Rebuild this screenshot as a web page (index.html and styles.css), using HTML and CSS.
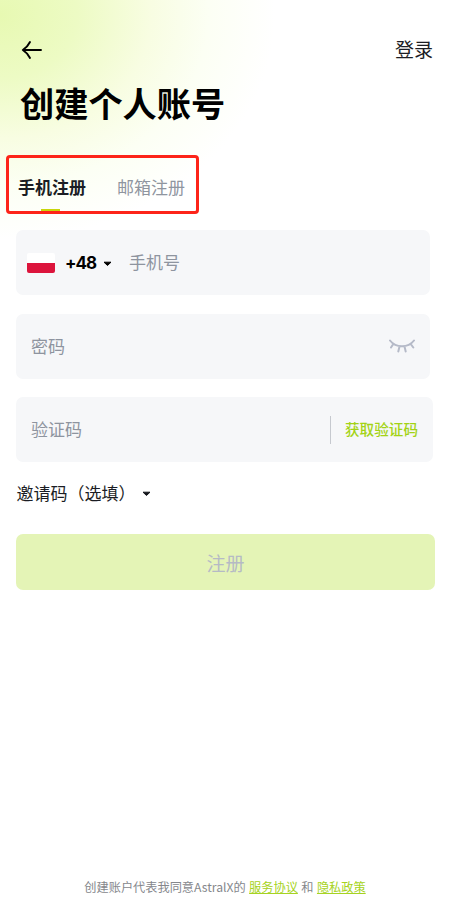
FILE: index.html
```html
<!DOCTYPE html>
<html lang="zh-CN">
  <head>
    <meta charset="UTF-8" />
    <meta name="viewport" content="width=device-width, initial-scale=1.0" />
    <title>创建个人账号</title>
    <link rel="stylesheet" href="styles.css">
  </head>
  <body>
    <header class="topbar">
      <a class="back" aria-label="返回">
        <svg width="22" height="20" viewBox="0 0 22 20" fill="none" stroke="#000" stroke-width="1.9" stroke-linecap="round" stroke-linejoin="round">
          <path d="M20 10H2M9 2C7.5 5 5 8 1.8 10C5 12 7.500 15 9 18" />
        </svg>
      </a>
      <a class="login">登录</a>
    </header>
    <h1>创建个人账号</h1>

    <nav class="tabs">
      <a class="tab active">手机注册</a>
      <a class="tab">邮箱注册</a>
    </nav>

    <form class="form">
      <div class="field phone">
        <span class="flag"></span>
        <span class="code">+48</span>
        <svg class="caret" width="9" height="6" viewBox="0 0 9 6"><path d="M1 1.200H8L4.500 4.500Z" fill="#000" stroke="#000" stroke-linejoin="round" /></svg>
        <span class="placeholder">手机号</span>
      </div>
      <div class="field password">
        <span class="placeholder">密码</span>
        <svg class="eye" width="26" height="14" viewBox="0 0 26 14" fill="none" stroke="#b5bac8" stroke-width="2" stroke-linecap="round">
          <path d="M1 1.500C7 9.300 19 9.300 25 1.500M4.300 5L2 8.500M10.500 7.500L9.300 12.500M15.500 7.500L16.700 12.500M21.700 5L24.300 8.500" />
        </svg>
      </div>
      <div class="field verify">
        <span class="placeholder">验证码</span>
        <span class="divider"></span>
        <span class="send">获取验证码</span>
      </div>
      <div class="invite">
        <span>邀请码（选填）</span>
        <svg class="caret" width="9" height="6" viewBox="0 0 9 6"><path d="M1 1.200H8L4.500 4.500Z" fill="#15171c" stroke="#15171c" stroke-linejoin="round" /></svg>
      </div>
      <button type="button" class="submit">注册</button>
    </form>

    <footer>创建账户代表我同意AstralX的 <a>服务协议</a> 和 <a>隐私政策</a></footer>
  </body>
</html>
```
FILE: styles.css
```css
* {
  box-sizing: border-box;
}
body {
  display: flex;
  flex-direction: column;
  height: 919px;
  margin: 0;
  font-family: "Noto Sans CJK SC", sans-serif;
  color: #1b1d24;
  background: radial-gradient(ellipse 275px 225px at 0 15px, #e7f9b2 0%, #edfbc4 28%, #f8fde2 55%, #fcfff4 76%, #fff 100%) #fff;
}
.topbar {
  display: flex;
  justify-content: space-between;
  align-items: center;
  height: 30px;
  margin-top: 35px;
  padding: 0 31px 0 21px;
}
.back {
  display: flex;
}
.login {
  padding-bottom: 3px;
  font-size: 19px;
}
h1 {
  margin: 12px 0 0 20px;
  font-size: 34.200px;
  line-height: 50px;
  font-weight: 700;
  color: #000;
}
.tabs {
  display: flex;
  gap: 31px;
  width: 193px;
  height: 59px;
  margin: 28px 0 0 6px;
  padding-left: 9px;
  border: 3px solid #fd2419;
  border-radius: 4px;
}
.tab {
  position: relative;
  font-size: 17px;
  line-height: 57px;
  color: #8f959f;
}
.tab.active {
  font-weight: 700;
  color: #1b1d24;
}
/* short underline below the selected tab */
.tab.active::after {
  content: "";
  position: absolute;
  left: 23px;
  top: 51px;
  width: 19px;
  height: 2px;
  background: #c8d60a;
}
.form {
  display: flex;
  flex-direction: column;
  margin: 16px 29px 0 16px;
}
.field {
  display: flex;
  align-items: center;
  height: 65px;
  margin-bottom: 18.500px;
  padding: 0 15px;
  border-radius: 7px;
  background: #f6f7f9;
}
.phone,
.password {
  margin-right: 5px;
}
.phone {
  padding-left: 11px;
}
.verify {
  margin-right: 2px;
}
.placeholder {
  padding-bottom: 2px;
  font-size: 17px;
  color: #8e949f;
}
.flag {
  width: 28px;
  height: 20px;
  border-radius: 2px;
  background: linear-gradient(#fff 50%, #dc143c 50%);
}
.code {
  width: 31px;
  margin-left: 10px;
  font-family: Inter, sans-serif;
  font-size: 17px;
  letter-spacing: -1px;
  font-weight: 700;
  color: #000;
}
.phone .caret {
  margin: 2px 17px 0 7px;
}
.eye {
  margin-left: auto;
}
.divider {
  width: 1px;
  height: 28px;
  margin: 0 14px 0 auto;
  background: #c6c9cf;
}
.send {
  padding-bottom: 2px;
  font-size: 14.600px;
  font-weight: 500;
  color: #a3d316;
}
.invite {
  display: flex;
  align-items: center;
  height: 26px;
  margin-top: -1px;
  padding-left: 0.5px;
  font-size: 17px;
}
.invite .caret {
  margin: 3px 0 0 6px;
}
.submit {
  height: 56px;
  margin-top: 28.500px;
  padding: 0;
  border: none;
  border-radius: 7px;
  background: #e4f4b6;
  font-family: inherit;
  font-size: 19px;
  color: #b5bac5;
}
footer {
  margin-top: auto;
  padding: 0 14px 22px 0;
  text-align: center;
  font-size: 12.200px;
  line-height: 20px;
  word-spacing: 0.7px;
  color: #85878c;
}
footer a {
  color: #a6d321;
  text-decoration: underline;
}
```
